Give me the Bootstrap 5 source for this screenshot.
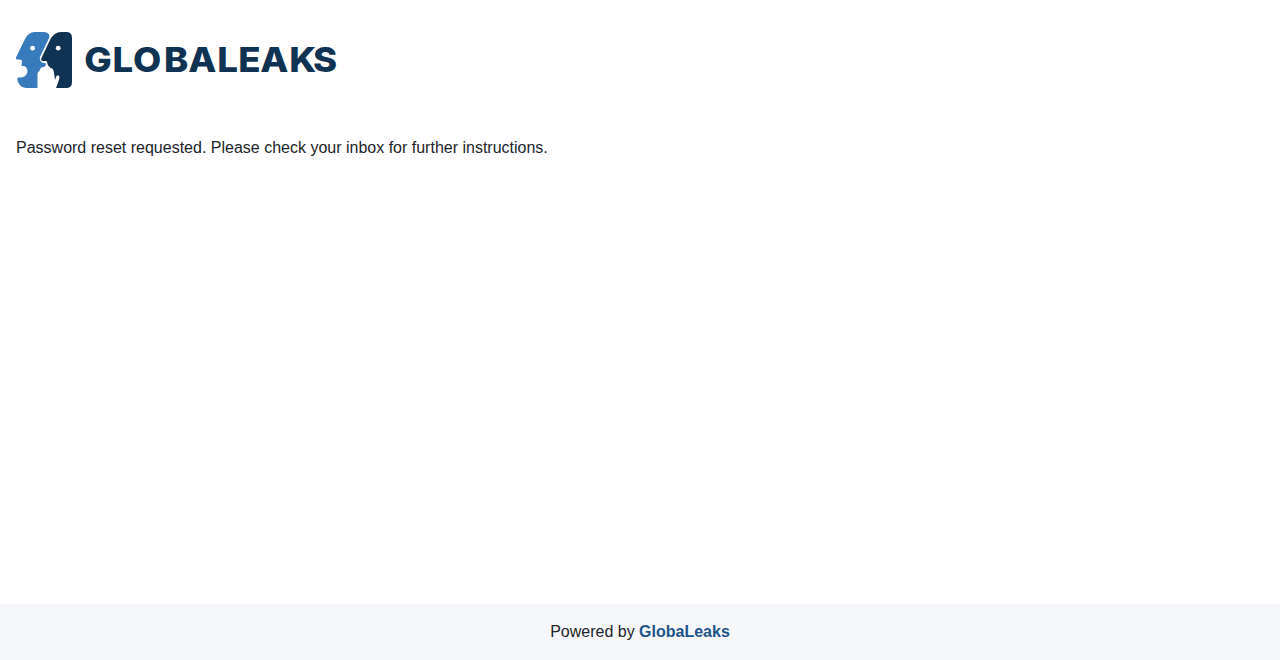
<!DOCTYPE html>
<html lang="en">
<head>
<meta charset="utf-8">
<meta name="viewport" content="width=device-width, initial-scale=1">
<title>GlobaLeaks</title>
<link href="https://cdn.jsdelivr.net/npm/bootstrap@5.3.0/dist/css/bootstrap.min.css" rel="stylesheet">
<style>
body { font-family: "Liberation Sans", Arial, sans-serif; color: #212529; }
.site-header { padding: 32px 16px; height: 120px; }
.site-logo { width: 322px; height: 56px; }
.site-logo text { font-family: Inter, sans-serif; font-weight: 800; font-size: 34.2px; fill: #103253; }
.site-footer { height: 56px; background: #f5f7fb; }
.site-footer a { color: #1f548a; }
</style>
</head>
<body class="d-flex flex-column min-vh-100 bg-white">
<header class="site-header">
  <svg class="site-logo d-block" viewBox="0 0 322 56" role="img" aria-label="GlobaLeaks">
    <path fill="#377bbc" d="M18 0H28Q35 1 33 6L24 25Q23 28 26 30.5L30 31.5Q30 34.5 28 35Q24 35 23.5 39Q21 40 21.5 44V56H10Q3 55 1.5 48.5V45.5H5Q10 45 11.500 40Q11.500 35 8 34H5.500L6 28.500Q5 27.200 1 27.500Q-.5 27 .2 25L9 7Q12 .8 18 0Z"/>
    <path fill="#103253" d="M45 0H51Q56 .5 56 6V50Q56 56 50 56H40Q43 49 43.500 45Q42.500 42 40.500 44L39 48Q38.500 43 37.500 38.500Q36.500 35.500 34.500 36Q33.500 34 32 33.500Q31.500 31 30.500 29L26 29Q24.500 28 25.500 26L34 8Q38 0 45 0Z"/>
    <g fill="#fff"><circle cx="16.600" cy="16.200" r="2.400"/><circle cx="42.200" cy="16.200" r="2.400"/></g>
    <text transform="scale(1.07 1)" y="40.200" x="63.800 90.200 109.400 138.300 160.900 188 207.600 228.300 255.400 277.500">GLOBALEAKS</text>
  </svg>
</header>
<main class="flex-grow-1 px-3 pt-3">Password reset requested. Please check your inbox for further instructions.</main>
<footer class="site-footer d-flex align-items-center justify-content-center">
  <div>Powered by <a class="fw-bold text-decoration-none" href="#">GlobaLeaks</a></div>
</footer>
<script src="https://cdn.jsdelivr.net/npm/bootstrap@5.3.0/dist/js/bootstrap.bundle.min.js"></script>
</body>
</html>
